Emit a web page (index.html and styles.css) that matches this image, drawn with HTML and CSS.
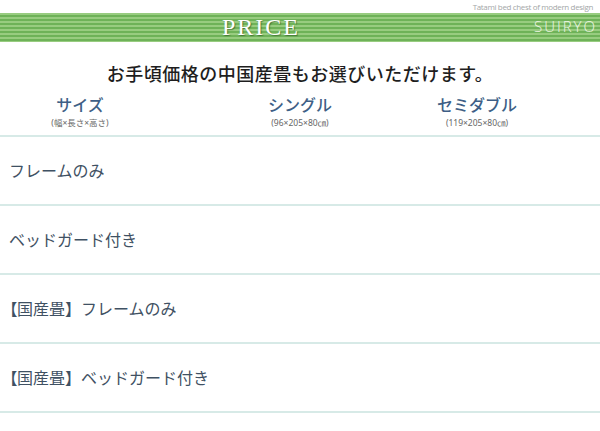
FILE: index.html
```html
<!DOCTYPE html>
<html lang="ja">
<head>
<meta charset="utf-8">
<link rel="stylesheet" href="styles.css">
</head>
<body>
<header class="top">
  <p class="tagline">Tatami bed chest of modern design</p>
  <div class="band">
    <h1 class="price">PRICE</h1>
    <span class="brand">SUIRYO</span>
  </div>
</header>
<p class="lead">お手頃価格の中国産畳もお選びいただけます。</p>
<div class="head">
  <div class="col c1"><span class="name">サイズ</span><span class="sub">(幅×長さ×高さ)</span></div>
  <div class="col c2"><span class="name">シングル</span><span class="sub">(96×205×80㎝)</span></div>
  <div class="col c3"><span class="name">セミダブル</span><span class="sub">(119×205×80㎝)</span></div>
</div>
<ul class="rows">
  <li class="row">フレームのみ</li>
  <li class="row">ベッドガード付き</li>
  <li class="row"><span class="br">【</span>国産畳】フレームのみ</li>
  <li class="row"><span class="br">【</span>国産畳】ベッドガード付き</li>
</ul>
</body>
</html>
```
FILE: styles.css
```css
* { box-sizing: border-box; }
html, body { margin: 0; padding: 0; background: #fff; }
body { width: 600px; height: 431px; overflow: hidden; font-family: "Noto Sans CJK JP", "Noto Sans", sans-serif; }
.top { position: relative; height: 44px; }
.tagline {
  position: absolute; right: 7px; top: 1px; margin: 0;
  font-family: "Open Sans", "Liberation Sans", sans-serif;
  font-size: 8px; color: #a3a7a7; letter-spacing: -0.35px;
}
.band {
  position: absolute; left: 0; right: 0; top: 13px; height: 29px;
  background: repeating-linear-gradient(to bottom, #98cc80 0, #98cc80 2px, #6eb258 2px, #6eb258 4px);
  display: flex; align-items: center; padding-left: 222px;
}
.price {
  margin: 0; font-family: "Liberation Serif", "DejaVu Serif", serif; font-weight: normal;
  font-size: 24px; color: #fff; letter-spacing: 2px; line-height: 29px;
  text-shadow: 1px 1px 1px rgba(40,80,30,0.6);
}
.brand {
  position: absolute; right: 3px; top: 4px;
  font-family: "Open Sans", "Liberation Sans", sans-serif; font-weight: 300;
  font-size: 15px; line-height: 18px; color: #eef6e6; letter-spacing: 2px;
}
.lead {
  margin: 17px 0 0; text-align: center; font-size: 18px; font-weight: 500;
  color: #1e1e1e; line-height: 24px; letter-spacing: 0.5px;
}
.head {
  display: grid; grid-template-columns: 160px 230px 174px;
  margin-top: 10px; height: 42px; border-bottom: 2px solid #d7eae7;
}
.col { display: flex; flex-direction: column; align-items: center; }
.c2 { padding-left: 50px; }
.name { font-size: 16px; line-height: 18px; color: #3e5f86; font-weight: 500; }
.sub { font-family: "Noto Sans", "Noto Sans CJK JP", sans-serif; font-size: 8.5px; line-height: 12px; color: #666; margin-top: 4px; }
.rows { list-style: none; margin: 0; padding: 0; }
.row {
  height: 69px; border-bottom: 2px solid #d7eae7; display: flex; align-items: center;
  padding: 0 0 2px 9px; font-size: 16px; color: #3f5163;
}
.br { font-feature-settings: "palt"; }
```
